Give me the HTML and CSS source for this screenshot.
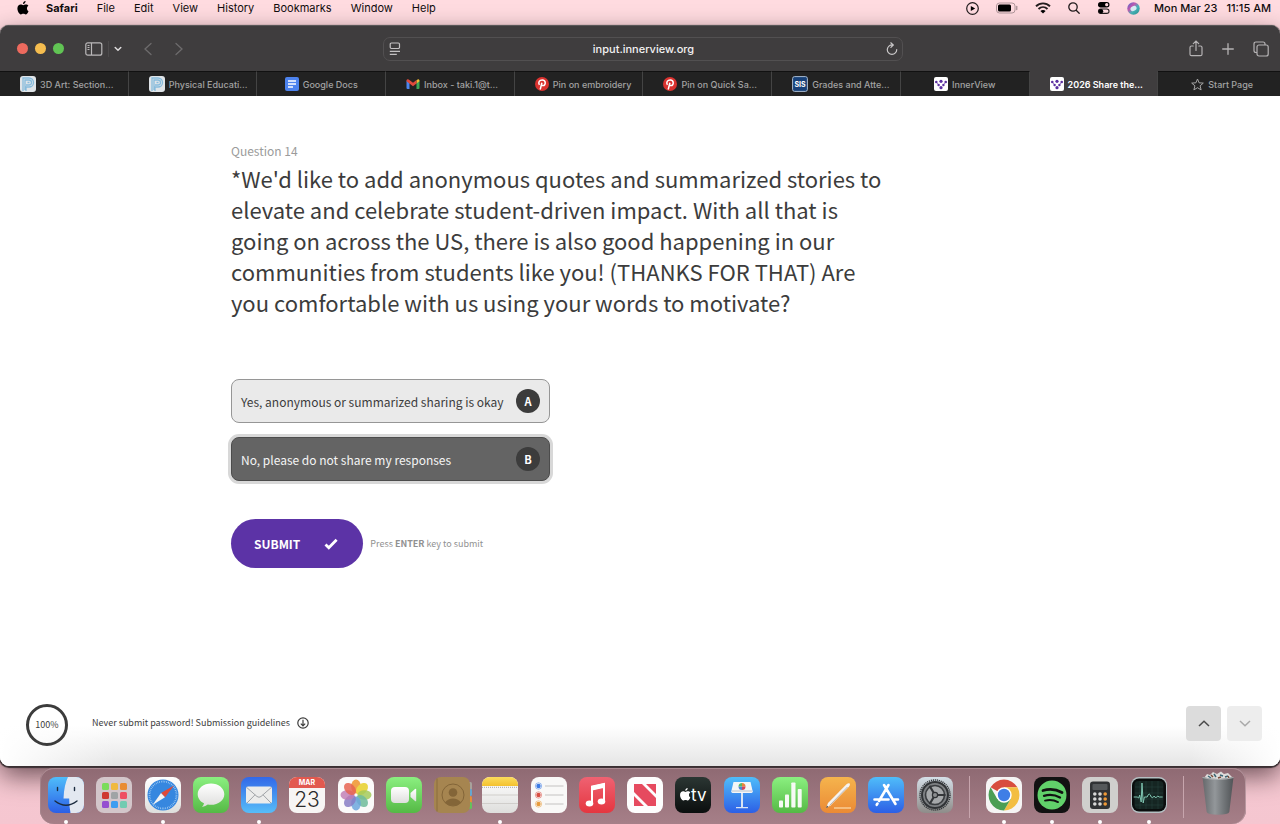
FILE: index.html
```html
<!DOCTYPE html>
<html lang="en" dir="ltr">

<head>
  <meta charset="utf-8">
  <meta name="viewport" content="width=device-width, initial-scale=1.0">
  <title>2026 Share the...</title>
  <link rel="stylesheet" href="styles.css">
</head>

<body>

  <!-- shared shapes and gradients -->
  <svg class="defs" width="0" height="0" aria-hidden="true">
    <defs>
      <linearGradient id="blue" x2="0" y2="1"><stop stop-color="#4fbdfa"/><stop offset="1" stop-color="#2c5fe6"/></linearGradient>
      <linearGradient id="mailblue" x2="0" y2="1"><stop stop-color="#3268e8"/><stop offset="1" stop-color="#57bdf8"/></linearGradient>
      <linearGradient id="green" x2="0" y2="1"><stop stop-color="#8bf080"/><stop offset="1" stop-color="#55b945"/></linearGradient>
      <linearGradient id="white" x2="0" y2="1"><stop stop-color="#ffffff"/><stop offset="1" stop-color="#dededc"/></linearGradient>
      <linearGradient id="red" x2="0" y2="1"><stop stop-color="#ef6272"/><stop offset="1" stop-color="#e53640"/></linearGradient>
      <linearGradient id="orange" x2="0" y2="1"><stop stop-color="#f5b44d"/><stop offset="1" stop-color="#eb8a35"/></linearGradient>
      <linearGradient id="yellow" x2="0" y2="1"><stop stop-color="#fbdc5c"/><stop offset="1" stop-color="#f4c12f"/></linearGradient>
      <linearGradient id="black" x2="0" y2="1"><stop stop-color="#2b3633"/><stop offset="1" stop-color="#0b0e0e"/></linearGradient>
      <linearGradient id="steel" x2="0" y2="1"><stop stop-color="#d5dfe8"/><stop offset="1" stop-color="#8e8c89"/></linearGradient>
      <linearGradient id="can" x2="1" y2="0"><stop stop-color="#65686b"/><stop offset=".4" stop-color="#93979a"/><stop offset=".65" stop-color="#767a7d"/><stop offset="1" stop-color="#505356"/></linearGradient>
      <linearGradient id="siri" x2="1" y2="1"><stop stop-color="#3f6fd0"/><stop offset=".35" stop-color="#c257b0"/><stop offset=".6" stop-color="#46b6b9"/><stop offset="1" stop-color="#2f8e8f"/></linearGradient>
      <clipPath id="tile"><rect width="36" height="36" rx="8"/></clipPath>
    </defs>
    <symbol id="apple" viewBox="0 0 12 14">
      <path d="M8.6 0c.1 1.5-1 2.9-2.6 3C5.800 1.600 7.100.2 8.600 0zM11.500 10.200c-.6 1.500-1.700 3.200-2.800 3.200-.9 0-1.200-.6-2.400-.6s-1.500.6-2.400.6C2.300 13.400.4 10.400.4 7.600.4 5 2 3.600 3.700 3.600c1 0 1.900.7 2.500.7.700 0 1.700-.8 3-.7.9 0 1.700.5 2.200 1.200-2 1.200-1.900 4.300.1 5.400z"/>
    </symbol>
    <symbol id="school" viewBox="0 0 16 16">
      <rect width="16" height="16" rx="3" fill="#dfe4e8"/>
      <path d="M3 15V2h6a4 4 0 0 1 0 9H6v4M5 14V4h4a2.500 2.500 0 0 1 0 5H6M7.500 6.500h2" fill="none" stroke="#86bbdc" stroke-width="1.300"/>
    </symbol>
    <symbol id="pin" viewBox="0 0 14 14">
      <circle cx="7" cy="7" r="7" fill="#d9322f"/>
      <path d="M5.200 12.500l1.700-6.700M4.400 7.800C2.800 5 4.600 3 7.200 3c4.200 0 3.600 5.600.9 5.600-.9 0-1.500-.5-1.600-1" fill="none" stroke="#fff" stroke-width="1.500"/>
    </symbol>
    <symbol id="innerview" viewBox="0 0 14 14">
      <rect width="14" height="14" rx="2" fill="#fff"/>
      <path d="M2.500 5.500l2.200 2.300M11.500 5.500L9.300 7.800" stroke="#9b7cc8" stroke-width="1"/>
      <g fill="#5b2fa0"><circle cx="2.300" cy="5" r="1.300"/><circle cx="7" cy="4.300" r="1.600"/><circle cx="11.700" cy="5" r="1.300"/><circle cx="4.600" cy="8" r="1.200"/><circle cx="9.400" cy="8" r="1.200"/><circle cx="7" cy="10.700" r="1.600"/></g>
    </symbol>
  </svg>

  <header class="menubar">
    <nav class="menus">
      <svg class="apple" width="12" height="14"><use href="#apple"/></svg>
      <b>Safari</b>
      <span>File</span>
      <span>Edit</span>
      <span>View</span>
      <span>History</span>
      <span>Bookmarks</span>
      <span>Window</span>
      <span>Help</span>
    </nav>
    <div class="status">
      <svg width="13" height="13" viewBox="0 0 13 13"><circle cx="6.500" cy="6.500" r="5.800" fill="none" stroke="#231d1e" stroke-width="1.200"/><path d="M4.800 3.900v5.200l4.400-2.600z"/></svg>
      <svg width="22" height="12" viewBox="0 0 22 12"><rect x=".5" y="1" width="18.500" height="10" rx="3" fill="none" stroke="#b0979b"/><rect x="2" y="2.500" width="13" height="7" rx="1.500"/><path d="M20.700 4.500v3" stroke="#b0979b" stroke-width="1.500" stroke-linecap="round"/></svg>
      <svg width="16" height="12" viewBox="0 0 16 12"><g fill="none" stroke="#231d1e" stroke-width="1.900"><path d="M1 4.300c4-3.900 10-3.900 14 0M3.500 7c2.600-2.500 6.400-2.500 9 0"/></g><path d="M8 11.600L5.400 9c1.500-1.300 3.700-1.300 5.200 0z"/></svg>
      <svg width="12" height="12" viewBox="0 0 12 12" fill="none" stroke="#231d1e" stroke-width="1.300" stroke-linecap="round"><circle cx="5" cy="5" r="4.200"/><path d="M8.200 8.200l3 3"/></svg>
      <svg width="13" height="12" viewBox="0 0 13 12"><rect x="1" y="0" width="11.500" height="5.400" rx="2.700"/><circle cx="9.700" cy="2.700" r="1.600" fill="#ffdbe0"/><rect x="1.500" y="7" width="10.500" height="4.400" rx="2.200" fill="none" stroke="#231d1e" stroke-width="1.100"/><circle cx="4" cy="9.200" r="2.200"/></svg>
      <svg width="13" height="13" viewBox="0 0 13 13"><circle cx="6.500" cy="6.500" r="6.200" fill="url(#siri)"/><ellipse cx="6.500" cy="6.500" rx="3.200" ry="2.400" fill="#d9ecf5" transform="rotate(-30 6.500 6.500)"/></svg>
      <time><span>Mon Mar 23</span> <span>11:15 AM</span></time>
    </div>
  </header>

  <div class="window">
    <div class="toolbar">
      <div class="tools-left">
        <i class="light red"></i>
        <i class="light yellow"></i>
        <i class="light green"></i>
        <button type="button" class="tool sidebar" aria-label="Sidebar"><svg width="18" height="14" viewBox="0 0 18 14" fill="none" stroke="#bab8b9" stroke-width="1.200"><rect x=".8" y=".8" width="16" height="12.400" rx="2"/><path d="M6.500 1v12M2.500 3.500h2M2.500 5.500h2M2.500 7.500h2"/></svg></button>
        <button type="button" class="tool groups" aria-label="Tab groups"><svg width="8" height="6" viewBox="0 0 8 6" fill="none" stroke="#dddbdc" stroke-width="1.500" stroke-linecap="round"><path d="M1.200 1.500L4 4.200l2.800-2.700"/></svg></button>
        <button type="button" class="tool back" aria-label="Back"><svg width="8" height="14" viewBox="0 0 8 14" fill="none" stroke="#6d6b6c" stroke-width="1.300" stroke-linecap="round"><path d="M7 1.500L1 7l6 5.500"/></svg></button>
        <button type="button" class="tool forward" aria-label="Forward"><svg width="8" height="14" viewBox="0 0 8 14" fill="none" stroke="#6d6b6c" stroke-width="1.300" stroke-linecap="round"><path d="M1 1.500L7 7l-6 5.500"/></svg></button>
      </div>
      <div class="address">
        <svg width="12" height="14" viewBox="0 0 12 14" fill="none" stroke="#c3c1c2" stroke-width="1.200"><rect x="1.200" y="1" width="9.300" height="5.500" rx="1.200"/><path d="M.8 9.300h10.200M.8 12.300h7"/></svg>
        <input type="text" value="input.innerview.org" aria-label="Address">
        <button type="button" class="tool" aria-label="Reload"><svg width="12" height="14" viewBox="0 0 12 14" fill="none" stroke="#c9c7c8" stroke-width="1.200" stroke-linecap="round"><path d="M6.500 3A4.700 4.700 0 1 0 10.700 7.500M4.800.8L7.300 3 4.900 5.400"/></svg></button>
      </div>
      <div class="tools-right">
        <button type="button" class="tool" aria-label="Share"><svg width="14" height="17" viewBox="0 0 14 17" fill="none" stroke="#b5b3b4" stroke-width="1.200" stroke-linecap="round"><path d="M4.200 6H2.500Q1 6 1 7.500v6.700q0 1.500 1.500 1.500h9q1.500 0 1.500-1.500V7.500Q13 6 11.500 6H9.800M7 10.500V1.200M4.300 3.700L7 1l2.700 2.700"/></svg></button>
        <button type="button" class="tool" aria-label="New tab"><svg width="12" height="12" viewBox="0 0 12 12" stroke="#b5b3b4" stroke-width="1.300" stroke-linecap="round"><path d="M6 .7v10.600M.7 6h10.600"/></svg></button>
        <button type="button" class="tool" aria-label="Tab overview"><svg width="16" height="16" viewBox="0 0 16 16" fill="none" stroke="#b5b3b4" stroke-width="1.200"><rect x="4" y="4" width="11.200" height="11" rx="2"/><path d="M4 11.500H3q-2 0-2-2V3q0-2 2-2h7q2 0 2 2v1"/></svg></button>
      </div>
    </div>

    <nav class="tabs">
      <a class="tab long" href="#"><svg width="16" height="16"><use href="#school"/></svg>3D Art: Section...</a>
      <a class="tab long" href="#"><svg width="16" height="16"><use href="#school"/></svg>Physical Educati...</a>
      <a class="tab" href="#"><svg width="14" height="14" viewBox="0 0 14 14"><rect width="14" height="14" rx="2" fill="#4d83ee"/><path d="M3 4h8M3 7h8M3 10h5" stroke="#fff" stroke-width="1.400"/></svg>Google Docs</a>
      <a class="tab long" href="#"><svg width="14" height="12" viewBox="0 0 14 12"><path d="M.5 2.500v7.500q0 1 1 1h2V5z" fill="#4c86ee"/><path d="M13.500 2.500v7.500q0 1-1 1h-2V5z" fill="#3ba757"/><path d="M13.500 2.500q-.6-2-2.400-.8l-.6.500V5.500l3-2.200z" fill="#f4bd32"/><path d="M.5 3.300v-.8q.4-2 2.200-1L7 4.700l3.500-2.600v3.500L7 8.200z" fill="#df4a3c"/></svg>Inbox - taki.1@t...</a>
      <a class="tab long" href="#"><svg width="14" height="14"><use href="#pin"/></svg>Pin on embroidery</a>
      <a class="tab long" href="#"><svg width="14" height="14"><use href="#pin"/></svg>Pin on Quick Sa...</a>
      <a class="tab long" href="#"><svg width="16" height="16" viewBox="0 0 16 16"><rect x=".6" y=".6" width="14.800" height="14.800" rx="2" fill="#174078" stroke="#a9bbd0"/><text x="8" y="10.500" font-size="7" font-weight="700" text-anchor="middle" fill="#fff">SIS</text></svg>Grades and Atte...</a>
      <a class="tab" href="#"><svg width="14" height="14"><use href="#innerview"/></svg>InnerView</a>
      <a class="tab long active" href="#"><svg width="14" height="14"><use href="#innerview"/></svg>2026 Share the...</a>
      <a class="tab" href="#"><svg width="13" height="13" viewBox="0 0 13 13" fill="none" stroke="#a5a5a5"><path d="M6.500 1l1.600 3.800 4.200.3-3.200 2.700 1 4.100-3.600-2.200-3.600 2.200 1-4.100L.7 5.100l4.200-.3z"/></svg>Start Page</a>
    </nav>

    <main class="survey">
      <form class="question">
        <p class="number">Question 14</p>
        <h1>*We'd like to add anonymous quotes and summarized stories to elevate and celebrate student-driven impact. With all that is going on across the US, there is also good happening in our communities from students like you! (THANKS FOR THAT) Are you comfortable with us using your words to motivate?</h1>

        <div class="options">
          <label class="option" for="yes">
            <input type="radio" id="yes" name="sharing" value="yes">
            <span class="answer">Yes, anonymous or summarized sharing is okay</span>
            <span class="key">A</span>
          </label>
          <label class="option selected" for="no">
            <input type="radio" id="no" name="sharing" value="no" checked>
            <span class="answer">No, please do not share my responses</span>
            <span class="key">B</span>
          </label>
        </div>

        <div class="send">
          <button type="button" class="submit">SUBMIT
            <svg width="14" height="12" viewBox="0 0 14 12" fill="none" stroke="#fff" stroke-width="2.800"><path d="M1.500 6.500l3.300 3.300L12.600 1.800"/></svg>
          </button>
          <span class="hint">Press <b>ENTER</b> key to submit</span>
        </div>
      </form>

      <footer class="footer">
        <div class="progress">100%</div>
        <a class="guidelines" href="#">Never submit password! Submission guidelines
          <svg width="12" height="12" viewBox="0 0 12 12" fill="none" stroke="#3c3c3c" stroke-width="1.200"><circle cx="6" cy="6" r="5.200"/><path d="M6 2.800v6M3.800 6.700L6 8.900l2.200-2.200"/></svg>
        </a>
        <div class="pager">
          <button type="button" aria-label="Previous question"><svg width="12" height="7" viewBox="0 0 12 7" fill="none" stroke="#4a4a4a" stroke-width="1.500"><path d="M1 6l5-4.800L11 6"/></svg></button>
          <button type="button" aria-label="Next question" disabled><svg width="12" height="7" viewBox="0 0 12 7" fill="none" stroke="#a9a9a9" stroke-width="1.500"><path d="M1 1l5 4.800L11 1"/></svg></button>
        </div>
      </footer>
    </main>
  </div>

  <ul class="dock">
    <!-- finder -->
    <li class="running"><svg viewBox="0 0 36 36"><g clip-path="url(#tile)"><rect width="36" height="36" fill="url(#blue)"/><path d="M20 0h16v36H22.500q-1.400-6-1.300-14.500H15.500Q16 8 20 0z" fill="#e3e8f0"/></g><path d="M9.500 10.500v3M26.500 10.500v3M7 24q11 8.500 22 0" fill="none" stroke="#1c2c3f" stroke-width="1.400" stroke-linecap="round"/></svg></li>
    <!-- launchpad -->
    <li><svg viewBox="0 0 36 36"><rect width="36" height="36" rx="8" fill="#d3c6ca"/><rect x="6" y="6" width="7" height="7" rx="1.500" fill="#7bdc5b"/><rect x="15" y="6" width="7" height="7" rx="1.500" fill="#f0b93d"/><rect x="24" y="6" width="7" height="7" rx="1.500" fill="#e98c33"/><rect x="6" y="15" width="7" height="7" rx="1.500" fill="#cf3a31"/><rect x="15" y="15" width="7" height="7" rx="1.500" fill="#a0a4a6"/><rect x="24" y="15" width="7" height="7" rx="1.500" fill="#ee4e62"/><rect x="6" y="24" width="7" height="7" rx="1.500" fill="#9650d0"/><rect x="15" y="24" width="7" height="7" rx="1.500" fill="#3d9df0"/><rect x="24" y="24" width="7" height="7" rx="1.500" fill="#72cbb1"/></svg></li>
    <!-- safari -->
    <li class="running"><svg viewBox="0 0 36 36"><rect width="36" height="36" rx="8" fill="url(#white)"/><circle cx="18" cy="18" r="15.500" fill="#3687df"/><circle cx="18" cy="18" r="13.500" fill="none" stroke="#b7daf7" stroke-width="1.800" stroke-dasharray=".6 1.200"/><path d="M29 8.500L16 16l4 4.200z" fill="#dd4a3b"/><path d="M7.500 28L16 16l4 4.200z" fill="#f3f3f3"/></svg></li>
    <!-- messages -->
    <li><svg viewBox="0 0 36 36"><rect width="36" height="36" rx="8" fill="url(#green)"/><path d="M18 6.500c-7.400 0-13.300 4.700-13.300 10.700 0 3.900 2.400 7.200 6.300 9q-.3 2-2 3.700 3.500-.5 5.800-2.400 1.500.3 3.200.3c7.400 0 13.300-4.600 13.300-10.600S25.400 6.500 18 6.500z" fill="url(#white)"/></svg></li>
    <!-- mail -->
    <li class="running"><svg viewBox="0 0 36 36"><rect width="36" height="36" rx="8" fill="url(#mailblue)"/><rect x="5" y="9.500" width="26" height="17" rx="2" fill="#ececeb"/><path d="M5.500 10.300l10.500 9.200q2 1.500 4 0l10.500-9.200M6 26l8-8.200M30 26l-8-8.200" fill="none" stroke="#a0a3a7" stroke-width="1"/></svg></li>
    <!-- calendar -->
    <li><svg viewBox="0 0 36 36"><g clip-path="url(#tile)"><rect width="36" height="36" fill="#f7f5f4"/><rect width="36" height="11" fill="#e2594f"/></g><text x="18" y="8.300" font-size="7" font-weight="700" text-anchor="middle" fill="#fff">MAR</text><text x="18" y="30" font-size="21" font-weight="300" text-anchor="middle" fill="#2b2b2b">23</text></svg></li>
    <!-- photos -->
    <li><svg viewBox="0 0 36 36"><rect width="36" height="36" rx="8" fill="#fbfafa"/><g opacity=".9"><ellipse cx="18" cy="9.500" rx="4.800" ry="7" fill="#f09a37"/><ellipse cx="18" cy="9.500" rx="4.800" ry="7" fill="#e9d335" transform="rotate(45 18 18)"/><ellipse cx="18" cy="9.500" rx="4.800" ry="7" fill="#9ac64a" opacity=".85" transform="rotate(90 18 18)"/><ellipse cx="18" cy="9.500" rx="4.800" ry="7" fill="#60b590" opacity=".85" transform="rotate(135 18 18)"/><ellipse cx="18" cy="9.500" rx="4.800" ry="7" fill="#5d9ddb" opacity=".85" transform="rotate(180 18 18)"/><ellipse cx="18" cy="9.500" rx="4.800" ry="7" fill="#7b70bf" opacity=".85" transform="rotate(225 18 18)"/><ellipse cx="18" cy="9.500" rx="4.800" ry="7" fill="#b96bab" opacity=".8" transform="rotate(270 18 18)"/><ellipse cx="18" cy="9.500" rx="4.800" ry="7" fill="#e5533f" opacity=".85" transform="rotate(315 18 18)"/></g></svg></li>
    <!-- facetime -->
    <li><svg viewBox="0 0 36 36"><rect width="36" height="36" rx="8" fill="url(#green)"/><rect x="5" y="10" width="18" height="16" rx="4" fill="url(#white)"/><path d="M24.500 16l4.500-4q1.200-.8 1.200.6v10.800q0 1.400-1.200.6l-4.500-4z" fill="url(#white)"/></svg></li>
    <!-- contacts -->
    <li><svg viewBox="0 0 36 36"><rect x="30" y="5" width="8" height="8" rx="1.500" fill="#a8a29b"/><rect x="30" y="12" width="8" height="7" rx="1.500" fill="#65a6cf"/><rect x="30" y="19" width="8" height="7" rx="1.500" fill="#e48c3a"/><rect x="30" y="25" width="8" height="7" rx="1.500" fill="#65c15c"/><rect width="36" height="36" rx="7" fill="#a68550"/><path d="M3 1.500v33" stroke="#8a6d3d" stroke-width="1"/><g fill="#836538"><circle cx="19" cy="15.500" r="4.300"/><path d="M10.800 25.500q3.500-4 8.200-4t8.200 4q-3.500 3.300-8.200 3.300t-8.200-3.300z"/></g><circle cx="19" cy="18" r="11" fill="none" stroke="#836538"/></svg></li>
    <!-- notes -->
    <li class="running"><svg viewBox="0 0 36 36"><g clip-path="url(#tile)"><rect width="36" height="36" fill="url(#white)"/><rect width="36" height="9" fill="url(#yellow)"/><path d="M0 10.300h36" stroke="#aaa69e" stroke-dasharray="1 1"/><path d="M0 18h36M0 26.500h36" stroke="#d0cecb"/></g></svg></li>
    <!-- reminders -->
    <li><svg viewBox="0 0 36 36"><rect width="36" height="36" rx="8" fill="#f9f8f7"/><path d="M14 9h18.500M14 18h18.500M14 27h18.500" stroke="#c4c2c1"/><g fill="none" stroke-width="1" stroke-opacity=".5"><circle cx="7.500" cy="9" r="3.200" stroke="#3b7ae4"/><circle cx="7.500" cy="18" r="3.200" stroke="#d94e43"/><circle cx="7.500" cy="27" r="3.200" stroke="#e79b3d"/></g><circle cx="7.500" cy="9" r="2.200" fill="#3b7ae4"/><circle cx="7.500" cy="18" r="2.200" fill="#d94e43"/><circle cx="7.500" cy="27" r="2.200" fill="#e79b3d"/></svg></li>
    <!-- music -->
    <li><svg viewBox="0 0 36 36"><rect width="36" height="36" rx="8" fill="url(#red)"/><path d="M13 26V10l12-2.700V23.500M13 12.500L25 9.800" fill="none" stroke="#fff" stroke-width="2"/><path d="M12 8.800L26 5.700v4.500l-14 3.100z" fill="#fff"/><ellipse cx="10.500" cy="26.500" rx="3.800" ry="3" fill="#fff"/><ellipse cx="22.500" cy="24.500" rx="3.800" ry="3" fill="#fff"/></svg></li>
    <!-- news -->
    <li><svg viewBox="0 0 36 36"><rect width="36" height="36" rx="8" fill="#fdfdfd"/><g fill="#e64a5f"><path d="M7 7h8l14 14v8h-8L7 15z"/><path d="M19 7h10v10zM7 19v10h10z"/></g></svg></li>
    <!-- tv -->
    <li><svg viewBox="0 0 36 36"><rect width="36" height="36" rx="8" fill="url(#black)"/><svg x="4.500" y="11" width="11.500" height="13" fill="#fff"><use href="#apple"/></svg><text x="16" y="24" font-size="17" font-weight="400" fill="#fff">tv</text></svg></li>
    <!-- keynote -->
    <li><svg viewBox="0 0 36 36"><rect width="36" height="36" rx="8" fill="url(#blue)"/><path d="M17 16h2v14h5v1.300H12V30h5z" fill="#d9e4f3"/><path d="M9.500 5h17l2.200 9.300q.1 1.700-1.200 1.700H8.500q-1.300 0-1.200-1.700z" fill="#f5f6f7"/><path d="M8 14h20" stroke="#b9c2cc"/><path d="M18 9.500V6a3.500 3.500 0 0 1 3.500 3.500z" fill="#e8843d"/><path d="M18 9.500h3.500A3.500 3.500 0 0 1 18 13z" fill="#d3475c"/><path d="M18 9.500V13a3.500 3.500 0 0 1-3.500-3.500z" fill="#4b86d6"/><path d="M18 9.500h-3.500A3.500 3.500 0 0 1 18 6z" fill="#58b868"/></svg></li>
    <!-- numbers -->
    <li><svg viewBox="0 0 36 36"><rect width="36" height="36" rx="8" fill="url(#green)"/><g fill="#f6faf4"><rect x="7" y="23.500" width="4" height="7" rx=".8"/><rect x="13" y="17.500" width="4" height="13" rx=".8"/><rect x="19.300" y="5.500" width="4.200" height="25" rx=".8"/><rect x="25.700" y="12" width="4" height="18.500" rx=".8"/></g></svg></li>
    <!-- pages -->
    <li><svg viewBox="0 0 36 36"><rect width="36" height="36" rx="8" fill="url(#orange)"/><path d="M14 31h17" stroke="#fbdcae" stroke-width="1.200"/><path d="M6 31l2-5L26.500 7.200q2-1.500 3.300-.6.700 1.400-.9 3.200L10.500 28.600z" fill="#f5f3f1"/><path d="M9.500 28.500l18-18.500" stroke="#a7a19c" stroke-width=".8"/><path d="M6 31l1-2.400 1.400 1.300z" fill="#4b4744"/></svg></li>
    <!-- app store -->
    <li><svg viewBox="0 0 36 36"><rect width="36" height="36" rx="8" fill="url(#blue)"/><path d="M16 8l11.500 19M20.500 8L11 24M6.500 22.500h14M25 22.500h5M9.500 26.500l-.8 1.300" fill="none" stroke="#fff" stroke-width="2.600" stroke-linecap="round"/></svg></li>
    <!-- settings -->
    <li><svg viewBox="0 0 36 36"><rect width="36" height="36" rx="8" fill="url(#steel)"/><circle cx="18" cy="18" r="15" fill="none" stroke="#34383b" stroke-width="1.500" stroke-dasharray="1.200 .8"/><circle cx="18" cy="18" r="13" fill="#7d8083" stroke="#303336" stroke-width="2"/><circle cx="18" cy="18" r="9.500" fill="#a5a8aa" stroke="#3a3d40" stroke-width="1.600"/><path d="M18 18h10.500M18 18l-5.500-9.300M18 18l-5.500 9.300" stroke="#34373a" stroke-width="2.200"/><circle cx="18" cy="18" r="2.600" fill="#8b8e90" stroke="#303336" stroke-width="1.200"/></svg></li>
    <li class="divider"></li>
    <!-- chrome -->
    <li class="running"><svg viewBox="0 0 36 36"><rect width="36" height="36" rx="8" fill="#f5f4f4"/><path d="M18 18L4.600 10.300A15.500 15.500 0 0 1 31.400 10.300H18z" fill="#d84d3e"/><path d="M31.400 10.300A15.500 15.500 0 0 1 18 33.500L24.700 21.900 18 10.300z" fill="#f3be42"/><path d="M18 33.500A15.500 15.500 0 0 1 4.600 10.300L11.300 21.900 24.700 21.900z" fill="#4b9e54"/><circle cx="18" cy="18" r="7.700" fill="#fff"/><circle cx="18" cy="18" r="6.200" fill="#3f7ee6"/></svg></li>
    <!-- spotify -->
    <li class="running"><svg viewBox="0 0 36 36"><rect width="36" height="36" rx="8" fill="#121212"/><circle cx="18" cy="18" r="14.500" fill="#61d16a"/><g fill="none" stroke="#121212" stroke-linecap="round"><path d="M9 13.500q10-3 19 2" stroke-width="2.800"/><path d="M10 18.800q8.500-2.400 16 1.700" stroke-width="2.300"/><path d="M11 23.600q7-1.800 13 1.500" stroke-width="1.900"/></g></svg></li>
    <!-- calculator -->
    <li class="running"><svg viewBox="0 0 36 36"><rect width="36" height="36" rx="8" fill="#d0cfcd"/><rect x="8" y="4.500" width="20" height="27.500" rx="3" fill="#303234"/><rect x="10.500" y="7" width="15" height="6" rx="1" fill="#55585a"/><g fill="#d7d7d6"><circle cx="12.800" cy="17" r="1.800"/><circle cx="18" cy="17" r="1.800"/><circle cx="12.800" cy="22" r="1.800"/><circle cx="18" cy="22" r="1.800"/><circle cx="12.800" cy="27" r="1.800"/><circle cx="18" cy="27" r="1.800"/></g><g fill="#f09a37"><circle cx="23.200" cy="17" r="1.800"/><circle cx="23.200" cy="22" r="1.800"/><circle cx="23.200" cy="27" r="1.800"/></g></svg></li>
    <!-- activity monitor -->
    <li class="running"><svg viewBox="0 0 36 36"><rect width="36" height="36" rx="8" fill="#b5c0c3"/><rect x="1" y="1.500" width="34" height="33" rx="7" fill="#0a0d0d"/><rect x="3.500" y="4" width="29" height="28" rx="4" fill="#152522"/><path d="M9 4v28M15 4v28M21 4v28M27 4v28M4 10h28M4 16h28M4 22h28M4 28h28" stroke="#2a4740" stroke-width=".5"/><path d="M3.500 20H7l1.500 1 1-3L11 25l.8-19L13 26l1.200-6H17q2-6 4 0 1.500 2 3-1l1.500 2 2-2 1.500 1h3.500" transform="translate(-.8)" fill="none" stroke="#7fc5b1" stroke-width="1"/></svg></li>
    <li class="divider"></li>
    <!-- trash -->
    <li><svg viewBox="0 0 36 36"><path d="M4 1l3-4 3 1 3-3 4 2 4-2.500 3 2.500 4-1 4 4v2H4z" fill="#dedcda"/><path d="M8-1l3 2M14-3l2 3M20-2l3 1M25 0l3-1" stroke="#3c6675" stroke-width="1.500"/><path d="M11-2l2 2M18 1l3-1M28-1l1 2" stroke="#7a4a37" stroke-width="1.500"/><path d="M2.500 0q15.500 4 31 0L29.300 35q-1 2.800-11.300 2.800T6.700 35z" fill="url(#can)"/><path d="M2.500.5q15.500 4 31 0" fill="none" stroke="#aeb1b3"/></svg></li>
  </ul>

</body>

</html>
```

FILE: styles.css
```css
* {
  box-sizing: border-box;
}

body {
  display: flex;
  flex-direction: column;
  height: 100vh;
  margin: 0;
  overflow: hidden;
  background: linear-gradient(#ffdbe0 30%, #f5c6d0);
  font-family: Inter, "Liberation Sans", sans-serif;
  font-size: 11px;
}

svg {
  flex: none;
}

.defs {
  position: absolute;
}

/* menu bar */
.menubar {
  display: flex;
  justify-content: space-between;
  height: 25px;
  padding: 0 9px 9px 17px;
  color: #120d0e;
}

.menus,
.status {
  display: flex;
  align-items: center;
  white-space: nowrap;
}

.menus {
  gap: 19px;
}

.status {
  gap: 17px;
}

.status time {
  display: flex;
  gap: 9px;
  margin-left: -3px;
  font-weight: 500;
}

.apple {
  margin-right: -2px;
}

/* browser window */
.window {
  display: flex;
  flex: 1;
  flex-direction: column;
  min-height: 0;
  margin-bottom: 2px;
  border-radius: 9px;
  overflow: hidden;
  background: #fff;
  box-shadow: 0 1px 1px 1px #3a2f32, 0 10px 26px rgba(20, 0, 6, 0.6);
}

.toolbar {
  display: grid;
  grid-template-columns: 1fr minmax(200px, 520px) 1fr;
  align-items: center;
  height: 46px;
  padding: 0 11px 0 17px;
  background: #3f3d3e;
  border-top: 1px solid #5a5859;
}

.tools-left,
.tools-right {
  display: flex;
  align-items: center;
}

.tools-right {
  gap: 19px;
  justify-content: flex-end;
}

.light {
  width: 11px;
  height: 11px;
  margin-right: 7px;
  border-radius: 50%;
}

.light.red {
  background: #ed6a5e;
}

.light.yellow {
  background: #f5bd4f;
}

.light.green {
  background: #61c454;
}

.tool {
  display: flex;
  padding: 0;
  background: none;
  border: 0;
}

.sidebar {
  margin-left: 14px;
}

.groups {
  margin-left: 5px;
  padding: 5px 0 5px 5px;
  border-left: 1px solid #4c4a4b;
}

.back {
  margin-left: 22px;
}

.forward {
  margin-left: 23px;
}

.address {
  display: flex;
  align-items: center;
  height: 24px;
  padding: 0 4px 0 5px;
  border: 1px solid #525051;
  border-radius: 7px;
}

.address input {
  flex: 1;
  min-width: 0;
  padding: 0;
  background: none;
  border: 0;
  color: #f3f1f2;
  font: 500 11px Inter, "Liberation Sans", sans-serif;
  text-align: center;
}

/* the last tab runs out past the window edge */
.tabs {
  display: grid;
  grid-template-columns: repeat(10, minmax(0, 1fr));
  height: 25px;
  margin-right: -7px;
  background: #222;
}

.tab {
  display: flex;
  align-items: center;
  justify-content: center;
  gap: 4px;
  border-top: 1px solid #111;
  border-right: 1px solid #444;
  color: #a3a3a3;
  font-size: 9px;
  font-weight: 500;
  text-decoration: none;
  white-space: nowrap;
}

.tab.long {
  justify-content: flex-start;
  padding-left: 20px;
}

.tab.active {
  background: #3f3d3e;
  border-top-color: #3f3d3e;
  color: #fff;
  font-weight: 600;
}

/* survey page */
.survey {
  display: flex;
  flex: 1;
  flex-direction: column;
  justify-content: space-between;
  background:
    linear-gradient(90deg, #fff, transparent 9%, transparent 93%, #fff),
    linear-gradient(#fff 94%, #e5e5e5);
  color: #3c3c3c;
  font-family: "Noto Sans CJK SC", "Noto Sans", sans-serif;
}

.question {
  width: 100%;
  max-width: 818px;
  margin: 0 auto;
  padding-top: 43px;
}

.number {
  margin: 0;
  color: #9b9b9b;
  font-size: 12px;
  line-height: 24px;
}

h1 {
  max-width: 660px;
  margin: 0;
  font-size: 22px;
  font-weight: 400;
  line-height: 31px;
}

.options {
  display: flex;
  flex-direction: column;
  gap: 14px;
  width: 319px;
  margin-top: 61px;
}

.option {
  position: relative;
  display: flex;
  align-items: center;
  height: 44px;
  padding: 0 9px;
  background: #eaeaea;
  border: 1px solid #969696;
  border-radius: 8px;
  font-size: 12px;
  white-space: nowrap;
}

.option input {
  position: absolute;
  margin: 0;
  opacity: 0;
}

.option.selected {
  background: #646464;
  border-color: #4c4c4c;
  box-shadow: 0 0 0 3px #d8d8d8;
  color: #f5f5f5;
}

.answer {
  flex: 1;
  min-width: 0;
}

.key {
  width: 24px;
  height: 24px;
  border-radius: 50%;
  background: #3c3c3c;
  color: #fff;
  font-size: 11px;
  font-weight: 700;
  line-height: 24px;
  text-align: center;
}

.send {
  display: flex;
  align-items: center;
  gap: 7px;
  margin-top: 38px;
}

.submit {
  display: flex;
  align-items: center;
  gap: 24px;
  height: 49px;
  padding: 0 25px 0 23px;
  background: #5c33a6;
  border: 0;
  border-radius: 25px;
  color: #fff;
  font-family: inherit;
  font-size: 12px;
  font-weight: 700;
}

.hint {
  color: #919191;
  font-size: 9px;
}

.footer {
  display: flex;
  align-items: center;
  padding: 0 18px 20px 26px;
}

.progress {
  width: 42px;
  height: 42px;
  border: 3px solid #3c3c3c;
  border-radius: 50%;
  font-size: 9px;
  line-height: 36px;
  text-align: center;
}

.guidelines {
  display: flex;
  align-items: center;
  gap: 7px;
  margin-left: 24px;
  padding-bottom: 5px;
  color: #3c3c3c;
  font-size: 9px;
  text-decoration: none;
}

.pager {
  display: flex;
  gap: 6px;
  margin-left: auto;
  padding-bottom: 3px;
}

.pager button {
  display: flex;
  align-items: center;
  justify-content: center;
  width: 35px;
  height: 35px;
  padding: 0;
  background: #dcdcdc;
  border: 0;
  border-radius: 4px;
}

.pager button:disabled {
  background: #ededed;
}

/* dock */
.dock {
  position: relative;
  display: flex;
  height: 56px;
  margin: 0 34px 0 40px;
  padding: 0 4px 0 2px;
  background: linear-gradient(#8f6a73, #a67f88);
  border-radius: 14px;
  box-shadow: inset 0 1px #ab8a92, inset 1px 0 #a5858c, inset -1px 0 #b8979f;
  list-style: none;
}

.dock li {
  display: flex;
  flex: 1;
  flex-direction: column;
  align-items: center;
  padding-top: 9px;
}

.dock svg {
  overflow: visible;
}

.dock li > svg {
  width: 36px;
  height: 36px;
}

.dock .running::after {
  content: "";
  width: 4px;
  height: 4px;
  margin-top: 7px;
  border-radius: 50%;
  background: #fff;
}

.dock .divider {
  flex: 0 0 21px;
  padding-top: 8px;
}

.dock .divider::after {
  content: "";
  width: 1px;
  height: 42px;
  background: #c7a5ad;
}
```
